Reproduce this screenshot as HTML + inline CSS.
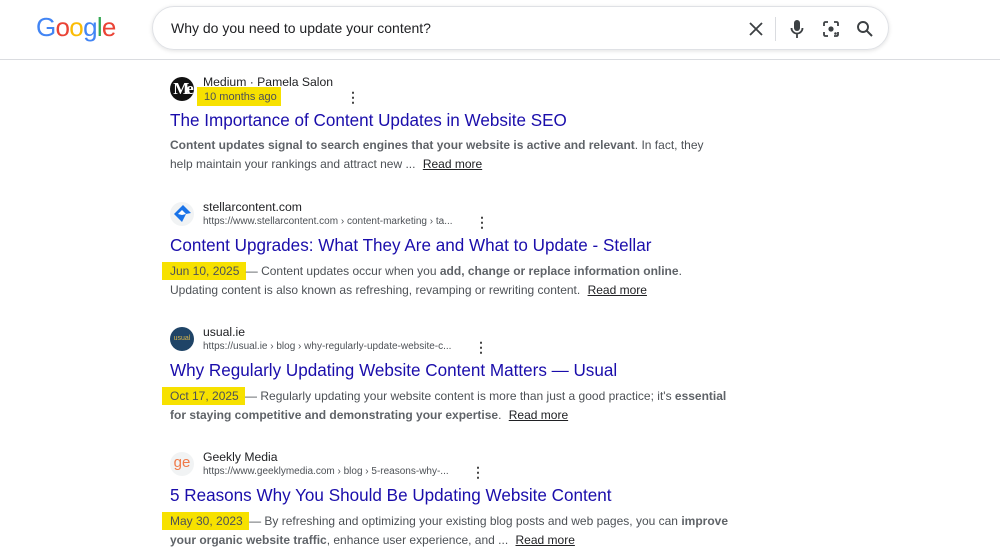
<!DOCTYPE html>
<html><head><meta charset="utf-8"><style>
*{margin:0;padding:0;box-sizing:border-box}
body{width:1000px;height:560px;background:#fff;font-family:"Liberation Sans",Arial,sans-serif;position:relative;overflow:hidden}
.logo{position:absolute;left:36px;top:12px;font-size:26px;letter-spacing:-0.7px;font-family:"Liberation Sans",sans-serif}
.sb{position:absolute;left:152px;top:6px;width:737px;height:44px;border:1px solid #dfe1e5;border-radius:22px;box-shadow:0 1px 4px rgba(0,0,0,.12)}
.q{position:absolute;left:18px;top:13px;font-size:14px;color:#202124}
.hr{position:absolute;left:0;top:59px;width:1000px;height:1px;background:#dadce0}
.r{position:absolute;left:170px;width:600px}
.fav{position:absolute;left:0;top:-4px;width:24px;height:24px;border-radius:50%;overflow:hidden}
.site{position:absolute;left:33px;top:-6px;font-size:12.2px;color:#202124;white-space:nowrap}
.url{position:absolute;left:33px;top:10px;font-size:10px;color:#4d5156;white-space:nowrap}
.dots{position:absolute;top:9px;font-size:14px;color:#444;font-weight:bold;line-height:14px;width:4px}
.t{position:absolute;left:0;top:30px;font-size:17.1px;color:#1a0dab;white-space:nowrap}
.s{position:absolute;left:0;top:56px;font-size:12px;color:#4d5156;line-height:19px;width:558px}
.s b{color:#5f6368}
.hl{background:#f7e100;padding:2px 3px 2px 0;margin-left:-8px;padding-left:8px}
.rm{color:#202124;text-decoration:underline;margin-left:4px}
</style></head><body>
<div class="logo"><span style="color:#4285f4">G</span><span style="color:#ea4335">o</span><span style="color:#fbbc05">o</span><span style="color:#4285f4">g</span><span style="color:#34a853">l</span><span style="color:#ea4335">e</span></div>
<div class="sb"><div class="q">Why do you need to update your content?</div>
<svg style="position:absolute;left:596px;top:15px" width="14" height="14" viewBox="0 0 14 14"><path d="M1 1L13 13M13 1L1 13" stroke="#3c4043" stroke-width="1.8"/></svg>
<div style="position:absolute;left:622px;top:10px;width:1px;height:24px;background:#dadce0"></div>
<svg style="position:absolute;left:637px;top:12px" width="14" height="20" viewBox="0 0 14 20"><rect x="4" y="1" width="6" height="11" rx="3" fill="#3c4043"/><path d="M1.5 9a5.5 5.5 0 0 0 11 0M7 14.5V19" stroke="#3c4043" stroke-width="1.8" fill="none"/></svg>
<svg style="position:absolute;left:669px;top:13px" width="18" height="18" viewBox="0 0 18 18"><path d="M2 6V3.5Q2 2 3.5 2H6M12 2h2.5Q16 2 16 3.5V6M2 12v2.5Q2 16 3.5 16H6M16 12v2.5Q16 16 14.5 16H12" stroke="#3c4043" stroke-width="1.8" fill="none"/><circle cx="9" cy="9" r="2.6" fill="#3c4043"/><circle cx="13.5" cy="13.5" r="1.3" fill="#3c4043"/></svg>
<svg style="position:absolute;left:703px;top:13px" width="18" height="18" viewBox="0 0 18 18"><circle cx="7" cy="7" r="5" stroke="#3c4043" stroke-width="1.9" fill="none"/><path d="M10.8 10.8L16 16" stroke="#3c4043" stroke-width="2"/></svg>
</div>
<div class="hr"></div>

<div class="r" style="top:81px">
<div class="fav" style="background:#111;color:#fff;font:bold 17px 'Liberation Serif',serif;line-height:24px;text-align:center;letter-spacing:-3px">Me</div>
<div class="site">Medium · Pamela Salon</div>
<div style="position:absolute;left:27px;top:6px;width:84px;height:19px;background:#f7e100;font-size:11px;color:#4d5156;padding:4px 0 0 7px">10 months ago</div>
<div class="dots" style="left:176px">⋮</div>
<div class="t">The Importance of Content Updates in Website SEO</div>
<div class="s" style="top:55px"><b>Content updates signal to search engines that your website is active and relevant</b>. In fact, they help maintain your rankings and attract new ... <span class="rm">Read more</span></div>
</div>

<div class="r" style="top:206px">
<div class="fav" style="background:#f1f3f4"><svg width="24" height="24" viewBox="0 0 24 24"><path d="M4 12L13 3l8 8-5 1-4 8z" fill="#1a73e8"/><path d="M8 12l4-4 4 4-4 1z" fill="#fff"/></svg></div>
<div class="site">stellarcontent.com</div>
<div class="url">https://www.stellarcontent.com › content-marketing › ta...</div>
<div class="dots" style="left:305px">⋮</div>
<div class="t">Content Upgrades: What They Are and What to Update - Stellar</div>
<div class="s"><span class="hl">Jun 10, 2025 </span>— Content updates occur when you <b>add, change or replace information online</b>. Updating content is also known as refreshing, revamping or rewriting content. <span class="rm">Read more</span></div>
</div>

<div class="r" style="top:331px">
<div class="fav" style="background:#1f4467;color:#d9b64a;font-size:7px;line-height:24px;text-align:center">usual</div>
<div class="site">usual.ie</div>
<div class="url">https://usual.ie › blog › why-regularly-update-website-c...</div>
<div class="dots" style="left:304px">⋮</div>
<div class="t">Why Regularly Updating Website Content Matters — Usual</div>
<div class="s"><span class="hl">Oct 17, 2025 </span>— Regularly updating your website content is more than just a good practice; it's <b>essential for staying competitive and demonstrating your expertise</b>. <span class="rm">Read more</span></div>
</div>

<div class="r" style="top:456px">
<div class="fav" style="background:#f1f3f4;color:#f07a4a;font-size:15px;line-height:22px;text-align:center">ge</div>
<div class="site">Geekly Media</div>
<div class="url">https://www.geeklymedia.com › blog › 5-reasons-why-...</div>
<div class="dots" style="left:301px">⋮</div>
<div class="t">5 Reasons Why You Should Be Updating Website Content</div>
<div class="s"><span class="hl">May 30, 2023 </span>— By refreshing and optimizing your existing blog posts and web pages, you can <b>improve your organic website traffic</b>, enhance user experience, and ... <span class="rm">Read more</span></div>
</div>
</body></html>
